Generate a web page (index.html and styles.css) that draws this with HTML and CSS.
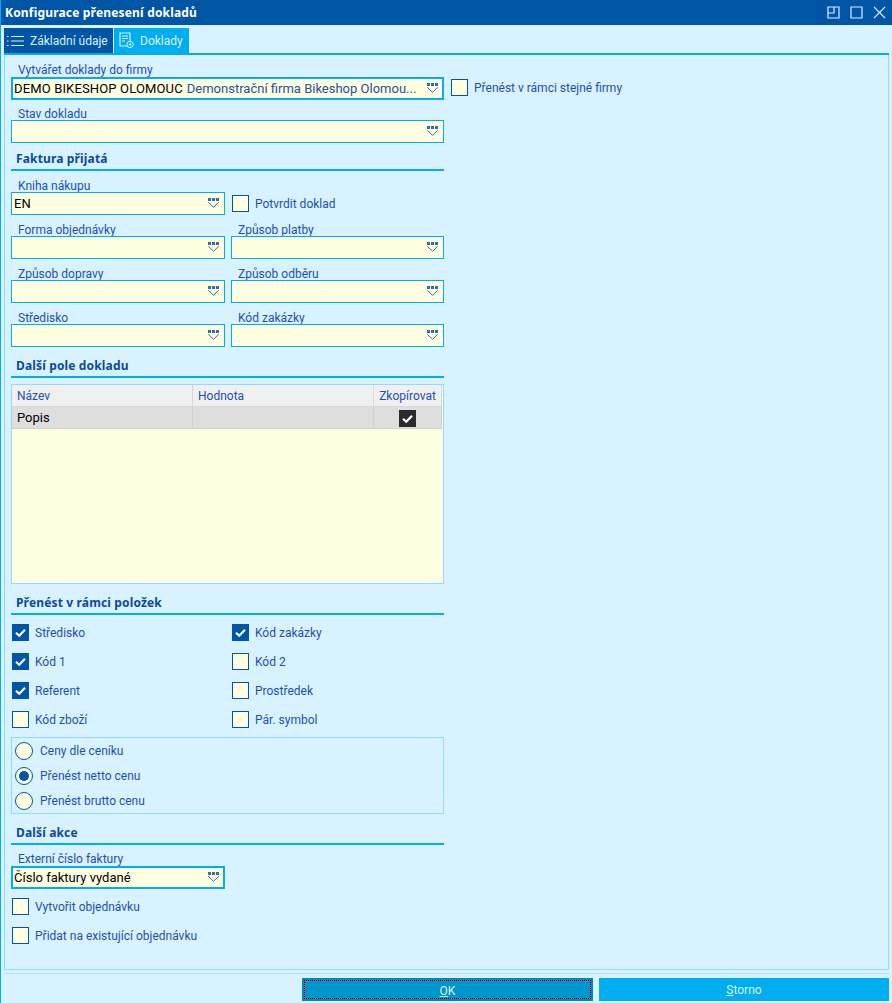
FILE: index.html
```html
<!DOCTYPE html>
<html>
<head>
<meta charset="utf-8">
<title>Konfigurace přenesení dokladů</title>
<link rel="stylesheet" href="styles.css">
</head>
<body>
<svg class="defs" width="0" height="0">
	<symbol id="drop" viewBox="0 0 11 10">
		<path d="M0 0h3v3H0zM4 0h3v3H4zM8 0h3v3H8z" fill="#2f6cb4"/>
		<path d="M.3 4.300L5.500 9.300L10.700 4.300" fill="none" stroke="#2f6cb4" stroke-width="1"/>
	</symbol>
	<symbol id="tick" viewBox="0 0 17 17">
		<path d="M4 8.800L7.200 11.800L13 5.800" fill="none" stroke="#fff" stroke-width="2.200"/>
	</symbol>
</svg>
<div class="window">
	<div class="titlebar">
		<span class="title">Konfigurace přenesení dokladů</span>
		<div class="winbtns">
			<svg width="13" height="13" viewBox="0 0 13 13"><path d="M1 1h11v11H1zM7 1v6H1" fill="none" stroke="#d9f2ff" stroke-width="1.200"/></svg>
			<svg width="13" height="13" viewBox="0 0 13 13"><path d="M1 1h11v11H1z" fill="none" stroke="#d9f2ff" stroke-width="1.200"/></svg>
			<svg width="13" height="13" viewBox="0 0 13 13"><path d="M1 1L12 12M12 1L1 12" fill="none" stroke="#d9f2ff" stroke-width="1.100"/></svg>
		</div>
	</div>
	<div class="tabs">
		<div class="tab tab-dark">
			<svg width="18" height="12" viewBox="0 0 18 12"><path d="M4 1.500h13M4 6h13M4 10.500h13" stroke="#d9f2ff" stroke-width="1.200"/><path d="M0 1h1.500v1H0zM0 5.500h1.500v1H0zM0 10h1.500v1H0z" fill="#d9f2ff"/></svg>
			Základní údaje
		</div>
		<div class="tab tab-light">
			<svg width="15" height="17" viewBox="0 0 15 17"><path d="M1 1h10v13H1z" fill="none" stroke="#d9f2ff" stroke-width="1.100"/><path d="M3 4h6M3 6.500h6M3 9h3" stroke="#d9f2ff"/><circle cx="11" cy="12.500" r="3.200" fill="#00aef0" stroke="#d9f2ff"/><circle cx="11" cy="12.500" r="1.200" fill="#d9f2ff"/></svg>
			Doklady
		</div>
	</div>
	<div class="panel">
		<div class="narrow">
			<div class="top-row">
				<div class="field field-focus">
					<label>Vytvářet doklady do firmy</label>
					<div class="input focus"><span class="val caps">DEMO BIKESHOP OLOMOUC</span><span class="desc">Demonstrační firma Bikeshop Olomou...</span><svg class="drop"><use href="#drop"/></svg></div>
				</div>
				<div class="check check-side"><span class="box"></span>Přenést v rámci stejné firmy</div>
			</div>
			<div class="field field-stav">
				<label>Stav dokladu</label>
				<div class="input"><svg class="drop"><use href="#drop"/></svg></div>
			</div>

			<h3 class="first">Faktura přijatá</h3>
			<div class="cols">
				<div class="field">
					<label>Kniha nákupu</label>
					<div class="input"><span class="val">EN</span><svg class="drop"><use href="#drop"/></svg></div>
				</div>
				<div class="check check-field"><span class="box"></span>Potvrdit doklad</div>
				<div class="field">
					<label>Forma objednávky</label>
					<div class="input"><svg class="drop"><use href="#drop"/></svg></div>
				</div>
				<div class="field">
					<label>Způsob platby</label>
					<div class="input"><svg class="drop"><use href="#drop"/></svg></div>
				</div>
				<div class="field">
					<label>Způsob dopravy</label>
					<div class="input"><svg class="drop"><use href="#drop"/></svg></div>
				</div>
				<div class="field">
					<label>Způsob odběru</label>
					<div class="input"><svg class="drop"><use href="#drop"/></svg></div>
				</div>
				<div class="field">
					<label>Středisko</label>
					<div class="input"><svg class="drop"><use href="#drop"/></svg></div>
				</div>
				<div class="field">
					<label>Kód zakázky</label>
					<div class="input"><svg class="drop"><use href="#drop"/></svg></div>
				</div>
			</div>

			<h3>Další pole dokladu</h3>
			<div class="gridbox">
				<table>
					<tr class="head"><th class="c1">Název</th><th class="c2">Hodnota</th><th class="c3">Zkopírovat</th></tr>
					<tr class="row"><td>Popis</td><td></td><td class="c3"><span class="darkcheck"><svg width="17" height="17"><use href="#tick"/></svg></span></td></tr>
				</table>
			</div>

			<h3>Přenést v rámci položek</h3>
			<div class="checks">
				<div class="check on"><span class="box"><svg width="17" height="17"><use href="#tick"/></svg></span>Středisko</div>
				<div class="check on"><span class="box"><svg width="17" height="17"><use href="#tick"/></svg></span>Kód zakázky</div>
				<div class="check on"><span class="box"><svg width="17" height="17"><use href="#tick"/></svg></span>Kód 1</div>
				<div class="check"><span class="box"></span>Kód 2</div>
				<div class="check on"><span class="box"><svg width="17" height="17"><use href="#tick"/></svg></span>Referent</div>
				<div class="check"><span class="box"></span>Prostředek</div>
				<div class="check"><span class="box"></span>Kód zboží</div>
				<div class="check"><span class="box"></span>Pár. symbol</div>
			</div>
			<div class="radios">
				<div class="radio"><span class="dot"></span>Ceny dle ceníku</div>
				<div class="radio on"><span class="dot"></span>Přenést netto cenu</div>
				<div class="radio"><span class="dot"></span>Přenést brutto cenu</div>
			</div>

			<h3>Další akce</h3>
			<div class="field field-focus half">
				<label>Externí číslo faktury</label>
				<div class="input focus"><span class="val">Číslo faktury vydané</span><svg class="drop"><use href="#drop"/></svg></div>
			</div>
			<div class="checks-single">
				<div class="check"><span class="box"></span>Vytvořit objednávku</div>
				<div class="check"><span class="box"></span>Přidat na existující objednávku</div>
			</div>
		</div>
	</div>
	<div class="buttons">
		<div class="btn btn-ok"><span class="focusring"><u>O</u>K</span></div>
		<div class="btn"><span><u>S</u>torno</span></div>
	</div>
</div>
</body>
</html>
```

FILE: styles.css
```css
*{
	margin: 0;
	padding: 0;
	box-sizing: border-box;
}
html,body{
	width: 892px;
	height: 1003px;
	overflow: hidden;
	background-color: #d9f2ff;
}
body{
	font: 12px/16px Roboto, "Noto Sans", sans-serif;
	color: #1d50b4;
}
.defs{
	display: block;
	height: 0;
}
.window{
	height: 1003px;
	border-left: 1px solid #00aef0;
	display: flex;
	flex-direction: column;
}
.titlebar{
	height: 25px;
	background-color: #0055a5;
	display: flex;
	align-items: center;
	justify-content: space-between;
	padding: 0 6px 0 4px;
}
.title{
	color: #fff;
	font: bold 12px/16px "Noto Sans", sans-serif;
	letter-spacing: .18px;
}
.winbtns{
	display: flex;
	gap: 10px;
	border-left: 1px solid #0a4d92;
	padding-left: 5px;
	height: 22px;
	align-items: center;
}
.tabs{
	display: flex;
	gap: 1px;
	margin: 3px 3px 0 3px;
	height: 27px;
	border-bottom: 2px solid #00aef0;
}
.tab{
	height: 25px;
	display: flex;
	align-items: center;
	color: #d9f2ff;
	gap: 5px;
	white-space: nowrap;
}
.tab-dark{
	width: 109px;
	background-color: #0055a5;
	padding-left: 3px;
}
.tab-light{
	width: 75px;
	background-color: #00aef0;
	padding-left: 5px;
	gap: 6px;
}
.panel{
	margin: 0 3px;
	height: 915px;
	border: 1px solid #8fdcff;
	border-top: 0;
}
.narrow{
	width: 433px;
	margin-left: 6px;
	padding-top: 7px;
}
.top-row{
	display: flex;
	width: 433px;
	position: relative;
}
.top-row .field{
	width: 433px;
	flex: none;
}
label{
	display: block;
	height: 14px;
	padding-left: 7px;
	line-height: 16px;
}
.field-focus label{
	height: 15px;
}
.field-stav{
	margin-top: 6px;
}
.input{
	height: 23px;
	border: 1px solid #00aef0;
	background-color: #fefee0;
	display: flex;
	align-items: center;
	padding: 1px 0 0 2px;
	position: relative;
	white-space: nowrap;
	overflow: hidden;
	gap: 4px;
	font-size: 13px;
}
.focus{
	border-width: 2px;
	padding-left: 1px;
}
.val{
	color: #000;
}
.caps{
	letter-spacing: .15px;
}
.desc{
	color: #2a4fa8;
}
.drop{
	position: absolute;
	right: 5px;
	top: 5px;
	width: 11px;
	height: 10px;
}
.focus .drop{
	right: 4px;
	top: 4px;
}
.check{
	display: flex;
	align-items: center;
	gap: 6px;
	height: 17px;
	white-space: nowrap;
}
.box{
	width: 17px;
	height: 17px;
	flex: none;
	background-color: #fefee0;
	border: 1px solid #0055a5;
	display: block;
}
.on .box{
	background-color: #0055a5;
}
.box svg{
	display: block;
	margin: -1px;
}
.check-side{
	position: absolute;
	left: 440px;
	top: 17px;
}
h3{
	font: bold 12px/16px "Noto Sans", sans-serif;
	letter-spacing: .15px;
	color: #0a4a9c;
	padding: 1px 0 0 5px;
	height: 21px;
	margin-top: 10px;
	border-bottom: 2px solid #00aef0;
}
h3.first{
	margin-top: 7px;
}
.cols{
	display: grid;
	grid-template-columns: 214px 213px;
	column-gap: 6px;
	row-gap: 7px;
	margin-top: 7px;
}
.check-field{
	align-self: end;
	height: 23px;
	margin-left: 1px;
}
.gridbox{
	margin-top: 6px;
	height: 200px;
	background-color: #fefee0;
	border: 1px solid #8fdcff;
}
table{
	width: 430px;
	table-layout: fixed;
	border-collapse: separate;
	border-spacing: 0;
}
th{
	font-weight: normal;
	text-align: left;
	height: 22px;
	background-color: #f0f0f0;
	border-right: 1px solid #d8d8d8;
	border-bottom: 1px solid #d8d8d8;
	padding-left: 5px;
}
td{
	height: 22px;
	background-color: #dedede;
	color: #000;
	border-right: 1px solid #d0d0d0;
	border-bottom: 1px solid #d0d0d0;
	padding-left: 5px;
	font-size: 13px;
}
.c1,.c2{
	width: 181px;
}
th.c3{
	text-align: center;
	padding-left: 0;
}
td.c3{
	padding: 1px 0 0;
}
.darkcheck{
	display: block;
	width: 17px;
	height: 17px;
	margin: 0 auto;
	background-color: #2b2b2b;
}
.darkcheck svg{
	display: block;
}
.checks{
	display: grid;
	grid-template-columns: 220px 213px;
	row-gap: 12px;
	margin-top: 9px;
	padding-left: 1px;
}
.radios{
	margin-top: 9px;
	height: 77px;
	border: 1px solid #8fdcff;
	padding: 0 3px;
}
.radio{
	display: flex;
	align-items: center;
	gap: 7px;
	height: 25px;
}
.dot{
	width: 18px;
	height: 18px;
	border-radius: 50%;
	border: 1px solid #0055a5;
	background-color: #fefee0;
	flex: none;
	display: flex;
	align-items: center;
	justify-content: center;
}
.on .dot::after{
	content: "";
	width: 10px;
	height: 10px;
	border-radius: 50%;
	background-color: #0055a5;
}
.half{
	width: 214px;
	margin-top: 6px;
}
.checks-single{
	display: flex;
	flex-direction: column;
	gap: 12px;
	margin-top: 9px;
	padding-left: 1px;
}
.buttons{
	display: flex;
	justify-content: flex-end;
	gap: 6px;
	margin: 3px 3px 0 3px;
	padding-top: 4px;
	border-top: 1px solid #a8e4ff;
}
.btn{
	width: 290px;
	height: 23px;
	background-color: #00aef0;
	color: #d9f2ff;
	text-align: center;
	line-height: 25px;
}
.btn span{
	display: block;
	height: 23px;
}
.btn-ok{
	width: 291px;
	background-color: #0095cc;
	border: 2px solid #0a83b8;
}
.btn-ok .focusring{
	height: 19px;
	line-height: 21px;
	border: 1px dotted #fff;
	outline: 1px dotted #000;
	outline-offset: -1px;
}
```
